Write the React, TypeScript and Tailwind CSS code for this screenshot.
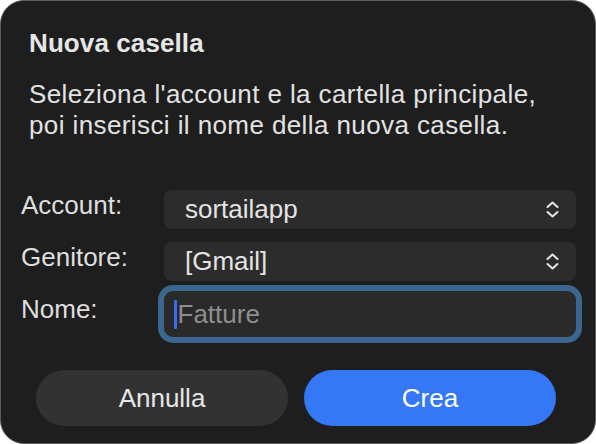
import React from "react";

function Chevrons() {
  return (
    <svg width="13" height="17" viewBox="0 0 13 17" fill="none" stroke="#e2e2e2" strokeWidth="2.1" strokeLinecap="round" strokeLinejoin="round">
      <polyline points="1.5,6 6.5,1.5 11.5,6" />
      <polyline points="1.5,11 6.5,15.5 11.5,11" />
    </svg>
  );
}

export default function App() {
  return (
    <div className="w-[596px] h-[444px] bg-white font-['Liberation_Sans',Arial,sans-serif]">
      <div className="h-full rounded-[24px] border border-[#5b5b5b] bg-[#1e1e1e] flex flex-col overflow-hidden">
        <div className="pl-[28px] pt-[26px]">
          <div className="text-[26px] leading-[32px] font-bold tracking-[0.1px] text-[#e6e6e6]">Nuova casella</div>
          <div className="mt-[20px] text-[26px] leading-[31px] tracking-[0.4px] text-[#e2e2e2]">
            Seleziona l'account e la cartella principale,
            <br />
            poi inserisci il nome della nuova casella.
          </div>
        </div>

        <div className="mt-[49px] pl-[20px] pr-[19px] grid grid-cols-[143px_1fr] text-[26px]">
          <div className="mt-[1px] leading-[28px] text-[#dedede]">Account:</div>
          <div className="h-[39px] rounded-[8px] bg-[#2c2c2c] flex items-center justify-between pl-[21px] pr-[17px]">
            <span className="leading-[39px] text-[#e4e4e4]">sortailapp</span>
            <Chevrons />
          </div>

          <div className="mt-[14px] leading-[28px] text-[#dedede]">Genitore:</div>
          <div className="mt-[13px] h-[39px] rounded-[8px] bg-[#2c2c2c] flex items-center justify-between pl-[21px] pr-[17px]">
            <span className="leading-[39px] text-[#e4e4e4]">[Gmail]</span>
            <Chevrons />
          </div>

          <div className="mt-[14px] leading-[28px] text-[#dedede]">Nome:</div>
          <div className="mt-[10px] h-[46px] rounded-[9px] bg-[#2a2a2a] shadow-[0_0_0_6px_#3a6690] flex items-center pl-[10px]">
            <span className="w-[2.5px] h-[29px] bg-[#3b6cf0] rounded-[1px]" />
            <span className="ml-[1px] leading-[46px] text-[#8e8e8e]">Fatture</span>
          </div>
        </div>

        <div className="mt-[33px] pl-[35px] pr-[39px] flex gap-[16px]">
          <button className="flex-1 h-[56px] rounded-full bg-[#323232] text-[26px] text-[#e6e6e6]">Annulla</button>
          <button className="flex-1 h-[56px] rounded-full bg-[#3478f6] text-[26px] text-white">Crea</button>
        </div>
      </div>
    </div>
  );
}
